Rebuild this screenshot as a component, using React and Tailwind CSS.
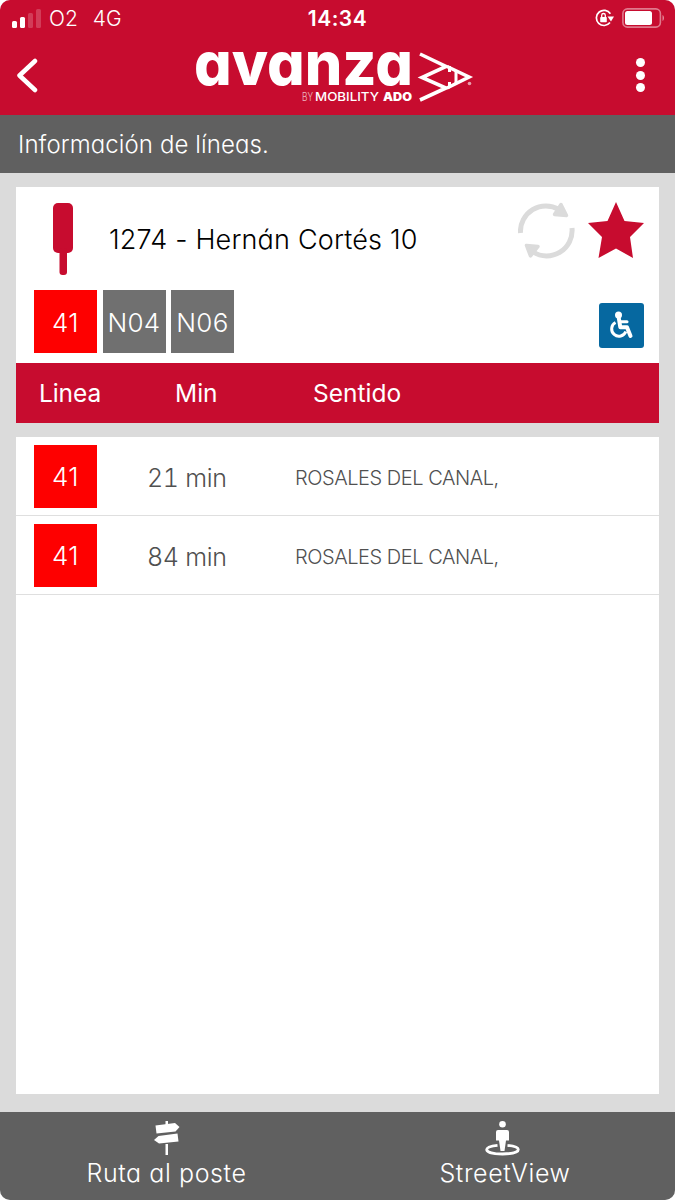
import React from 'react'

const stop = {
  name: '1274 - Hernán Cortés 10',
  lines: [
    { code: '41', active: true },
    { code: 'N04', active: false },
    { code: 'N06', active: false }
  ]
}

const arrivals = [
  { id: 1, line: '41', time: '21 min', direction: 'ROSALES DEL CANAL,' },
  { id: 2, line: '41', time: '84 min', direction: 'ROSALES DEL CANAL,' }
]

const LineBadge = ({ code, active }) => (
  <div
    className={`flex h-[63px] w-[63px] shrink-0 items-center justify-center pt-px text-[26px] font-light tracking-[0.3px] text-white ${
      active ? 'bg-[#fe0000]' : 'bg-[#707070]'
    }`}
  >
    {code}
  </div>
)

const StatusBar = () => (
  <div className="flex h-9 items-center justify-between pl-3 pr-2.5 font-['Inter',sans-serif] text-[21px] text-white">
    <div className="flex w-[198px] items-center pt-0.5 font-light">
      <svg width="30" height="20" viewBox="0 0 30 20" fill="#fff">
        <rect x="0" y="12" width="5" height="7" rx="1.5" />
        <rect x="8" y="8" width="5" height="11" rx="1.5" />
        <rect x="16" y="4" width="5" height="15" rx="1.5" opacity=".2" />
        <rect x="24" y="0" width="5" height="19" rx="1.5" opacity=".2" />
      </svg>
      <span className="ml-[7px]">O2</span>
      <span className="ml-[15px]">4G</span>
    </div>
    <span className="pt-0.5 font-semibold tracking-[0.5px]">14:34</span>
    <div className="flex w-[200px] items-center justify-end gap-2">
      <svg width="19" height="18" viewBox="0 0 19 18" fill="none">
        <path d="M15.4 4.800A7.600 7.600 0 1 0 15 13.600" stroke="#fff" strokeWidth="1.700" />
        <path d="M12.500 7.500h6.500l-3 5z" fill="#fff" />
        <rect x="5.200" y="8" width="6.600" height="5.200" rx=".8" fill="#fff" />
        <path d="M6.700 8V6.300a1.800 1.800 0 0 1 3.600 0V8" stroke="#fff" strokeWidth="1.300" />
      </svg>
      <svg width="43" height="20" viewBox="0 0 43 20" fill="none">
        <rect x=".9" y=".9" width="37.500" height="18.200" rx="4.500" stroke="#fff" strokeWidth="1.600" opacity=".45" />
        <rect x="3" y="3" width="27" height="14" rx="2.500" fill="#fff" />
        <path d="M40.500 7c2 1 2 5 0 6z" fill="#fff" opacity=".5" />
      </svg>
    </div>
  </div>
)

const Logo = () => (
  <svg width="280" height="60" viewBox="0 0 280 60" fill="#fff" className="overflow-visible">
    <text x="0" y="38" fontSize="60" fontWeight="800" textLength="219" lengthAdjust="spacingAndGlyphs">
      avanza
    </text>
    <text x="108" y="54" fontSize="11.500" fontWeight="300" textLength="11" lengthAdjust="spacingAndGlyphs" opacity=".7">BY</text>
    <text x="121" y="54" fontSize="12" fontWeight="500" textLength="64" lengthAdjust="spacingAndGlyphs">MOBILITY</text>
    <text x="189" y="54" fontSize="12" fontWeight="900" textLength="29" lengthAdjust="spacingAndGlyphs">ADO</text>
    <g fill="none" stroke="#fff" strokeWidth="3.600">
      <path d="M226 7L252 19.500L228 30.500L252 41L226 53" />
      <path d="M253 19.500L275 30L253 41" />
      <path d="M255.500 19v6M255.500 35v6M262 24v12" strokeWidth="3" />
    </g>
    <circle cx="275.500" cy="36.500" r="1.800" opacity=".6" />
  </svg>
)

const Header = () => (
  <header className="h-[115px] bg-[#c70c2f]">
    <StatusBar />
    <div className="flex items-start pl-4 pr-[30px]">
      <svg width="24" height="36" viewBox="0 0 24 36" className="mt-[22px]" fill="none" stroke="#fff" strokeWidth="4.500" strokeLinecap="round" strokeLinejoin="round">
        <path d="M19 3L3.500 17.500L19 32" />
      </svg>
      <div className="ml-[154px] mt-[11px]">
        <Logo />
      </div>
      <div className="ml-auto mt-[22px] flex flex-col gap-[3.5px]">
        <span className="h-[9px] w-[9px] rounded-full bg-white" />
        <span className="h-[9px] w-[9px] rounded-full bg-white" />
        <span className="h-[9px] w-[9px] rounded-full bg-white" />
      </div>
    </div>
  </header>
)

const StopIcon = () => (
  <svg width="20" height="72" viewBox="0 0 20 72" fill="#c70c2f">
    <rect width="20" height="50" rx="5" />
    <rect x="6.500" y="45" width="7.500" height="27" rx="3" />
  </svg>
)

const RefreshIcon = () => (
  <svg width="58" height="58" viewBox="0 0 58 58" fill="none" stroke="#dbdbdb">
    <path d="M2.500 31A25.500 25.500 0 0 1 41 7.500" strokeWidth="5" />
    <path d="M54 26A25.500 25.500 0 0 1 15 50" strokeWidth="5" />
    <path d="M43 2.500L48.500 13.500L36.500 12.500Z" fill="#dbdbdb" strokeWidth="3.500" strokeLinejoin="round" />
    <path d="M8.500 43.500L20 44.500L12.500 54Z" fill="#dbdbdb" strokeWidth="3.500" strokeLinejoin="round" />
  </svg>
)

const StarIcon = () => (
  <svg width="56" height="56" viewBox="0 0 56 56" fill="#c70c2f">
    <path d="M28 0L36.500 19L56 21L42 35L45 56L28 46.500L10.500 56L14 35L0 21L19.500 19Z" />
  </svg>
)

const WheelchairIcon = () => (
  <svg width="45" height="45" viewBox="0 0 45 45" fill="none" stroke="#fff">
    <circle cx="19.500" cy="12" r="3.500" fill="#fff" stroke="none" />
    <path d="M19.800 15L21.300 24.300H28L31.500 33" strokeWidth="4" strokeLinejoin="round" strokeLinecap="round" />
    <path d="M21 18.700H28" strokeWidth="3" strokeLinecap="round" />
    <path d="M16.500 19.500A7.300 7.300 0 1 0 26.800 28.500" strokeWidth="3" />
  </svg>
)

const SignpostIcon = () => (
  <svg width="26" height="35" viewBox="0 0 26 35" fill="#fff">
    <path d="M11.500 0h2.500v4h-2.500zM11.500 23h2.500v11h-2.500z" />
    <path d="M1.500 4.500L21 2L25.500 6L21.500 10.500L2.500 12.500Z" />
    <path d="M23.500 12.500L4.500 15L0 19L5 22.500L24.500 20.500Z" />
  </svg>
)

const StreetViewIcon = () => (
  <svg width="35" height="35" viewBox="0 0 35 35" fill="#fff">
    <circle cx="17.500" cy="3.300" r="3.300" />
    <path d="M11 11q0-2 2-2h9q2 0 2 2v8.500h-3l-1.500 10.500h-4L14 19.500h-3z" />
    <path d="M12.500 24.300C6 25 1.700 26.500 1.700 28.500c0 2.700 7 4.500 15.800 4.500s15.800-1.800 15.800-4.500c0-2-4.300-3.500-10.800-4.200" fill="none" stroke="#fff" strokeWidth="2.800" />
  </svg>
)

export default function App() {
  return (
    <div className="bg-white">
      <div className="flex h-[1200px] w-[675px] flex-col overflow-hidden rounded-[10px] bg-[#dbdbdb] font-['Inter',sans-serif] [font-feature-settings:'cv11']">
        <Header />
        <div className="flex h-[58px] items-center bg-[#606060] pl-[18px] pt-0.5 text-2xl font-light tracking-[0.1px] text-white">
          Información de líneas.
        </div>

        <main className="flex flex-1 flex-col px-4 pb-[18px] pt-3.5">
          {/* Stop card */}
          <section className="h-[176px] bg-white pl-[18px] pr-[15px] pt-[15px]">
            <div className="flex h-[88px] items-start">
              <div className="ml-[19px] mt-px">
                <StopIcon />
              </div>
              <h1 className="ml-9 mt-[18px] flex-1 text-[27px] font-light tracking-[0.18px] text-black">{stop.name}</h1>
              <div className="flex gap-3">
                <RefreshIcon />
                <StarIcon />
              </div>
            </div>
            <div className="flex items-start justify-between">
              <div className="flex gap-[5.5px]">
                {stop.lines.map((line) => (
                  <LineBadge key={line.code} code={line.code} active={line.active} />
                ))}
              </div>
              <div className="mt-[13px] h-[45px] w-[45px] rounded-[3px] bg-[#0668a0]">
                <WheelchairIcon />
              </div>
            </div>
          </section>

          {/* Table header */}
          <div className="flex h-[60px] items-center bg-[#c70c2f] pl-[23px] pt-px text-[24.5px] text-white [font-feature-settings:normal]">
            <span className="w-[136px] tracking-[-0.1px]">Linea</span>
            <span className="w-[138px]">Min</span>
            <span>Sentido</span>
          </div>

          {/* Arrivals */}
          <ul className="mt-3.5 flex-1 bg-white">
            {arrivals.map((item) => (
              <li key={item.id} className="flex h-[79px] items-center border-b border-[#dfdfdf] pl-[18px]">
                <LineBadge code={item.line} active />
                <span className="ml-[50px] w-[148px] pt-[5px] text-[25px] font-light tracking-[-0.3px] text-[#505050] [font-feature-settings:'cv11','tnum']">
                  {item.time}
                </span>
                <span className="pt-[3px] text-[20px] font-light tracking-[-0.45px] text-[#505050]">{item.direction}</span>
              </li>
            ))}
          </ul>
        </main>

        <footer className="flex h-[88px] bg-[#606060] pr-1.5 text-[25px] font-light tracking-[0.6px] text-white">
          <div className="flex flex-1 flex-col items-center pr-[3px] pt-[9px]">
            <SignpostIcon />
            <span className="-mt-px">Ruta al poste</span>
          </div>
          <div className="flex flex-1 flex-col items-center pt-[9px]">
            <StreetViewIcon />
            <span className="-mt-px ml-[5px]">StreetView</span>
          </div>
        </footer>
      </div>
    </div>
  )
}
